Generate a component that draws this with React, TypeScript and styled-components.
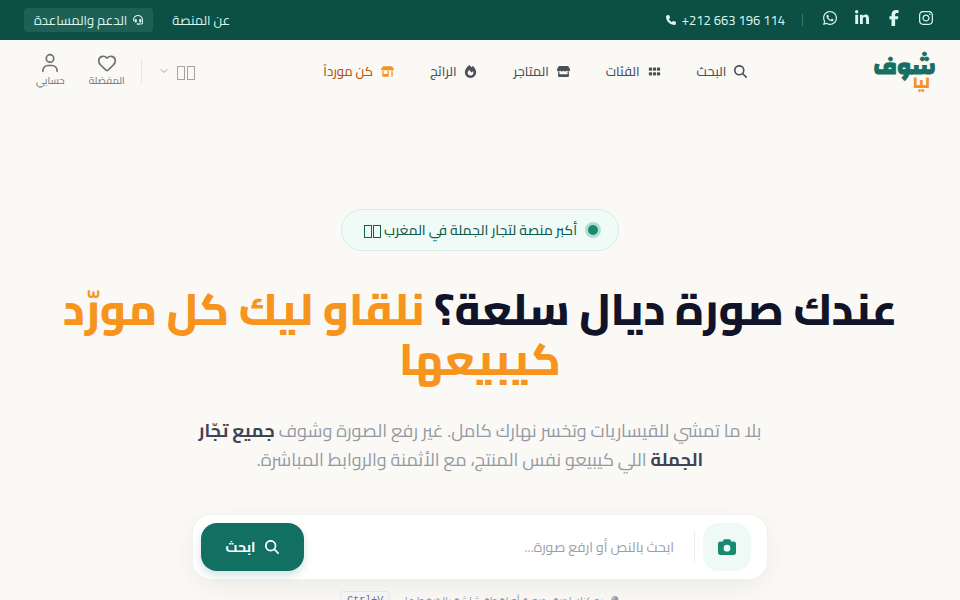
import React from 'react';
import styled, { createGlobalStyle } from 'styled-components';
import {
  FaCamera,
  FaFacebookF,
  FaFire,
  FaGrip,
  FaHeadset,
  FaInstagram,
  FaLightbulb,
  FaLinkedinIn,
  FaMagnifyingGlass,
  FaPhone,
  FaShop,
  FaWhatsapp,
} from 'react-icons/fa6';
import { FaStore } from 'react-icons/fa';
import { ChevronDown, Heart } from 'lucide-react';

const GlobalStyle = createGlobalStyle`
  *, *::before, *::after { box-sizing: border-box; }
  html, body { margin: 0; overflow-x: hidden; }
  body {
    background: #faf9f6;
    color: #111827;
    font-family: Cairo, "Noto Sans Arabic", "Open Sans", sans-serif;
    font-size: 14px;
  }
  a { color: inherit; text-decoration: none; }
  button, input { font: inherit; }
  svg { display: block; flex: none; }
`;

const Page = styled.div`
  height: 100vh;
  overflow: hidden;
`;

const TopBar = styled.div`
  display: flex;
  align-items: center;
  justify-content: space-between;
  height: 40px;
  padding: 0 24px;
  background: #0b4f45;
  color: #d9f7ee;
  font-size: 13px;
`;

const TopGroup = styled.div<{ $gap: number }>`
  display: flex;
  align-items: center;
  gap: ${(p) => p.$gap}px;
`;

const Socials = styled.div`
  display: flex;
  gap: 12px;
  padding-bottom: 4px;
  a { display: grid; place-items: center; width: 20px; }
`;

const Divider = styled.span<{ $h: number; $color: string }>`
  width: 1px;
  height: ${(p) => p.$h}px;
  background: ${(p) => p.$color};
`;

const Phone = styled.a`
  display: flex;
  align-items: center;
  gap: 6px;
`;

const Support = styled.a`
  display: flex;
  align-items: center;
  gap: 6px;
  height: 24px;
  padding: 0 10px;
  border-radius: 4px;
  background: #1f6056;
`;

const Header = styled.header`
  display: flex;
  align-items: center;
  justify-content: space-between;
  height: 62px;
  padding: 0 24px;
`;

const Logo = styled.a`
  position: relative;
  display: block;
  width: 60px;
  height: 44px;
  color: #17705f;
  font-family: Changa, Cairo, sans-serif;
  font-size: 23px;
  font-weight: 800;
  line-height: 36px;
  -webkit-text-stroke: 1px currentColor;
`;

const LogoSub = styled.span`
  position: absolute;
  right: 6px;
  bottom: 0;
  color: #f7941d;
  font-size: 17px;
  line-height: 20px;
  -webkit-text-stroke: 0;
`;

const Nav = styled.nav`
  display: flex;
  align-items: center;
  gap: 36px;
`;

const NavLink = styled.a<{ $accent?: boolean }>`
  display: flex;
  align-items: center;
  gap: 8px;
  color: ${(p) => (p.$accent ? '#b45309' : '#4b5059')};
  font-size: 13px;
  font-weight: 500;
  svg { color: ${(p) => (p.$accent ? '#f7941d' : '#4b5059')}; }
`;

const Tools = styled.div`
  display: flex;
  align-items: center;
`;

const Language = styled.button`
  display: flex;
  align-items: center;
  gap: 7px;
  margin-left: 16px;
  padding: 0;
  border: 0;
  background: none;
  color: #a8a29a;
`;

const Tool = styled.a`
  display: flex;
  flex-direction: column;
  align-items: center;
  color: #6f6f78;
  font-size: 10px;
  line-height: 16px;
`;

const ToolRow = styled.div`
  display: flex;
  gap: 24px;
  padding: 0 16px 0 12px;
`;

const Hero = styled.main`
  display: flex;
  flex-direction: column;
  align-items: center;
  padding: 107px 32px 0;
`;

const Badge = styled.div`
  display: flex;
  align-items: center;
  gap: 8px;
  height: 42px;
  padding: 0 17px 0 22px;
  border: 1px solid #d9ece6;
  border-radius: 21px;
  background: #f0faf7;
  color: #115e4c;
  font-size: 14px;
  font-weight: 500;
`;

const BadgeText = styled.span`
  display: flex;
  align-items: center;
  gap: 3px;
`;

const Dot = styled.span`
  width: 16px;
  height: 16px;
  border: 3px solid #b4dcd2;
  border-radius: 50%;
  background: #178a72;
`;

const Glyphs = styled.span<{ $h: number; $gap: number }>`
  display: inline-flex;
  gap: ${(p) => p.$gap}px;
  padding-top: 3px;
  &::before, &::after {
    content: '';
    width: 8px;
    height: ${(p) => p.$h}px;
    border: 1px solid currentColor;
  }
`;

const Title = styled.h1`
  max-width: 896px;
  margin: 33px 0 0;
  color: #111328;
  font-size: 44px;
  font-weight: 800;
  line-height: 50px;
  text-align: center;
  em { color: #f7941d; font-style: normal; }
`;

const Lead = styled.p`
  max-width: 576px;
  margin: 32px 0 0;
  color: #9499a4;
  font-size: 18px;
  line-height: 29px;
  text-align: center;
  strong { color: #3f4352; font-weight: 700; }
`;

const SearchBox = styled.form`
  display: flex;
  align-items: center;
  width: 100%;
  max-width: 574px;
  height: 64px;
  margin-top: 41px;
  padding: 0 16px 0 8px;
  border-radius: 18px;
  background: #fff;
  box-shadow: 0 0 0 1px #f0f0ee, 0 8px 28px rgba(0, 0, 0, 0.06);
`;

const CameraButton = styled.button`
  display: grid;
  place-items: center;
  width: 48px;
  height: 48px;
  padding: 0;
  border: 0;
  border-radius: 16px;
  background: #eff9f6;
  color: #178a72;
`;

const SearchInput = styled.input`
  flex: 1;
  min-width: 0;
  height: 48px;
  padding: 0 20px;
  border: 0;
  outline: 0;
  background: none;
  font-size: 14px;
  &::placeholder { color: #9aa0aa; opacity: 1; }
`;

const SearchButton = styled.button`
  display: flex;
  align-items: center;
  justify-content: center;
  gap: 10px;
  width: 103px;
  height: 48px;
  padding: 0;
  border: 0;
  border-radius: 16px;
  background: #127063;
  box-shadow: 0 4px 8px rgba(18, 112, 99, 0.2);
  color: #fff;
  font-size: 14px;
  font-weight: 700;
`;

const Separator = styled.span`
  width: 1px;
  height: 32px;
  margin-right: 8px;
  background: #ebecee;
`;

const Hint = styled.p`
  display: flex;
  align-items: center;
  gap: 6px;
  margin: 12px 0 0;
  color: #9499a4;
  font-size: 11px;
  line-height: 20px;
  white-space: nowrap;
`;

const Key = styled.kbd`
  padding: 0 6px;
  border: 1px solid #e3e5e8;
  border-radius: 4px;
  background: #f3f4f6;
  color: #6b7280;
  font-family: "Liberation Mono", monospace;
  font-size: 10px;
  line-height: 18px;
`;

const UserIcon = () => (
  <svg width="20" height="20" viewBox="0 0 24 24" fill="none" stroke="currentColor" strokeWidth="2" strokeLinecap="round">
    <circle cx="12" cy="6.5" r="4.5" />
    <path d="M3.5 22v-1a6 6 0 0 1 6-6h5a6 6 0 0 1 6 6v1" />
  </svg>
);

const navItems = [
  { label: 'البحث', Icon: FaMagnifyingGlass },
  { label: 'الفئات', Icon: FaGrip },
  { label: 'المتاجر', Icon: FaStore },
  { label: 'الرائج', Icon: FaFire },
  { label: 'كن مورداً', Icon: FaShop, accent: true },
];

export default function App() {
  return (
    <Page dir="rtl" lang="ar">
      <GlobalStyle />
      <TopBar>
        <TopGroup $gap={17}>
          <Socials>
            <a href="#instagram" aria-label="Instagram"><FaInstagram size={16} /></a>
            <a href="#facebook" aria-label="Facebook"><FaFacebookF size={16} /></a>
            <a href="#linkedin" aria-label="LinkedIn"><FaLinkedinIn size={16} /></a>
            <a href="#whatsapp" aria-label="WhatsApp"><FaWhatsapp size={16} /></a>
          </Socials>
          <TopGroup $gap={17}>
            <Divider $h={12} $color="#3b766c" />
            <Phone href="tel:+212663196114">
              <bdi dir="ltr">+212 663 196 114</bdi>
              <FaPhone size={10} />
            </Phone>
          </TopGroup>
        </TopGroup>
        <TopGroup $gap={19}>
          <a href="#about">عن المنصة</a>
          <Support href="#support"><FaHeadset size={10} />الدعم والمساعدة</Support>
        </TopGroup>
      </TopBar>

      <Header>
        <Logo href="#home">شوف<LogoSub>ليا</LogoSub></Logo>
        <Nav>
          {navItems.map(({ label, Icon, accent }) => (
            <NavLink key={label} href="#nav" $accent={accent}><Icon size={13} />{label}</NavLink>
          ))}
        </Nav>
        <Tools>
          <Language type="button" aria-label="اللغة">
            <Glyphs $h={14} $gap={2} />
            <ChevronDown size={12} />
          </Language>
          <Divider $h={24} $color="#e7e5e1" />
          <ToolRow>
            <Tool href="#favorites"><Heart size={20} />المفضلة</Tool>
            <Tool href="#account"><UserIcon />حسابي</Tool>
          </ToolRow>
        </Tools>
      </Header>

      <Hero>
        <Badge>
          <Dot />
          <BadgeText>أكبر منصة لتجار الجملة في المغرب<Glyphs $h={13} $gap={1} /></BadgeText>
        </Badge>
        <Title>عندك صورة ديال سلعة؟ <em>نلقاو ليك كل مورّد كيبيعها</em></Title>
        <Lead>
          بلا ما تمشي للقيساريات وتخسر نهارك كامل. غير رفع الصورة وشوف <strong>جميع تجّار الجملة</strong> اللي كيبيعو نفس المنتج، مع الأثمنة والروابط المباشرة.
        </Lead>
        <SearchBox onSubmit={(e) => e.preventDefault()}>
          <CameraButton type="button" aria-label="رفع صورة"><FaCamera size={18} /></CameraButton>
          <Separator />
          <SearchInput type="text" aria-label="البحث" placeholder="ابحث بالنص أو ارفع صورة..." />
          <SearchButton type="submit"><FaMagnifyingGlass size={14} />ابحث</SearchButton>
        </SearchBox>
        <Hint><FaLightbulb size={10} />يمكنك لصق صورة أو لقطة شاشة بالضغط على<Key dir="ltr">Ctrl+V</Key></Hint>
      </Hero>
    </Page>
  );
}
